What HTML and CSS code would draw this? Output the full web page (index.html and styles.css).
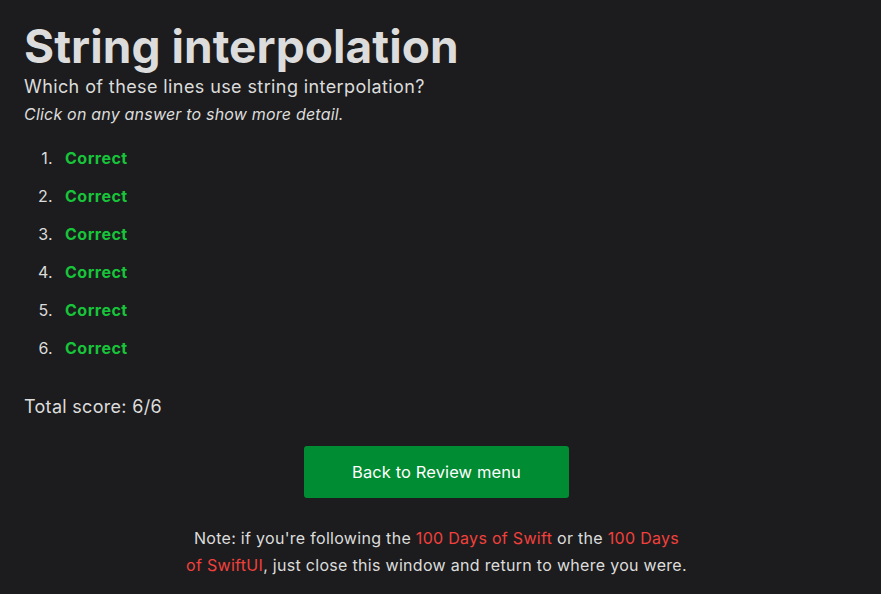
FILE: index.html
```html
<!DOCTYPE html>
<html lang="en">
<head>
<meta charset="utf-8">
<title>String interpolation</title>
<link rel="stylesheet" href="styles.css">
</head>
<body>
<main class="page">
  <h1 class="title">String interpolation</h1>
  <p class="question">Which of these lines use string interpolation?</p>
  <p class="hint">Click on any answer to show more detail.</p>
  <ol class="answers">
    <li><span class="correct">Correct</span></li>
    <li><span class="correct">Correct</span></li>
    <li><span class="correct">Correct</span></li>
    <li><span class="correct">Correct</span></li>
    <li><span class="correct">Correct</span></li>
    <li><span class="correct">Correct</span></li>
  </ol>
  <p class="score">Total score: 6/6</p>
  <div class="actions">
    <a class="button" href="#">Back to Review menu</a>
  </div>
  <p class="note">Note: if you're following the <a href="#">100 Days of Swift</a> or the <a href="#">100 Days of&nbsp;SwiftUI</a>, just close this window and return to where you were.</p>
</main>
</body>
</html>
```
FILE: styles.css
```css
html, body {
  margin: 0;
  padding: 0;
  background: #1c1c1e;
}
body {
  color: #dcdcdc;
  font-family: Inter, "Noto Sans", sans-serif;
}
.page {
  padding: 18px 32px 0 24px;
}
.title {
  margin: 0;
  font-size: 46px;
  line-height: 56px;
  font-weight: 700;
  color: #dcdcdc;
  letter-spacing: 0.05px;
}
.question {
  margin: 0;
  font-size: 18px;
  line-height: 26px;
  letter-spacing: 0.4px;
}
.hint {
  margin: 0;
  font-size: 16px;
  line-height: 28px;
  font-style: italic;
  letter-spacing: 0.2px;
}
.answers {
  list-style: none;
  counter-reset: answer;
  margin: 20px 0 0;
  padding: 0;
  font-size: 16px;
  line-height: 20px;
}
.answers li {
  counter-increment: answer;
  display: flex;
  margin-bottom: 18px;
}
.answers li::before {
  content: counter(answer) ".";
  width: 29px;
  margin-right: 12px;
  text-align: right;
  letter-spacing: 0.3px;
}
.correct {
  color: #17c53a;
  font-weight: 700;
  letter-spacing: 0.5px;
}
.score {
  margin: 37px 0 0;
  font-size: 18px;
  line-height: 24px;
  letter-spacing: 0.3px;
}
.actions {
  display: flex;
  justify-content: center;
  margin-top: 27px;
}
.button {
  display: flex;
  align-items: center;
  justify-content: center;
  width: 265px;
  height: 52px;
  background: #008c32;
  color: #ffffff;
  border-radius: 3px;
  text-decoration: none;
  font-size: 16.5px;
  letter-spacing: 0.1px;
}
.note {
  margin: 27px auto 0;
  max-width: 510px;
  text-align: center;
  font-size: 16px;
  line-height: 27px;
  letter-spacing: 0.3px;
}
.note a {
  color: #f2403c;
  text-decoration: none;
}
```
